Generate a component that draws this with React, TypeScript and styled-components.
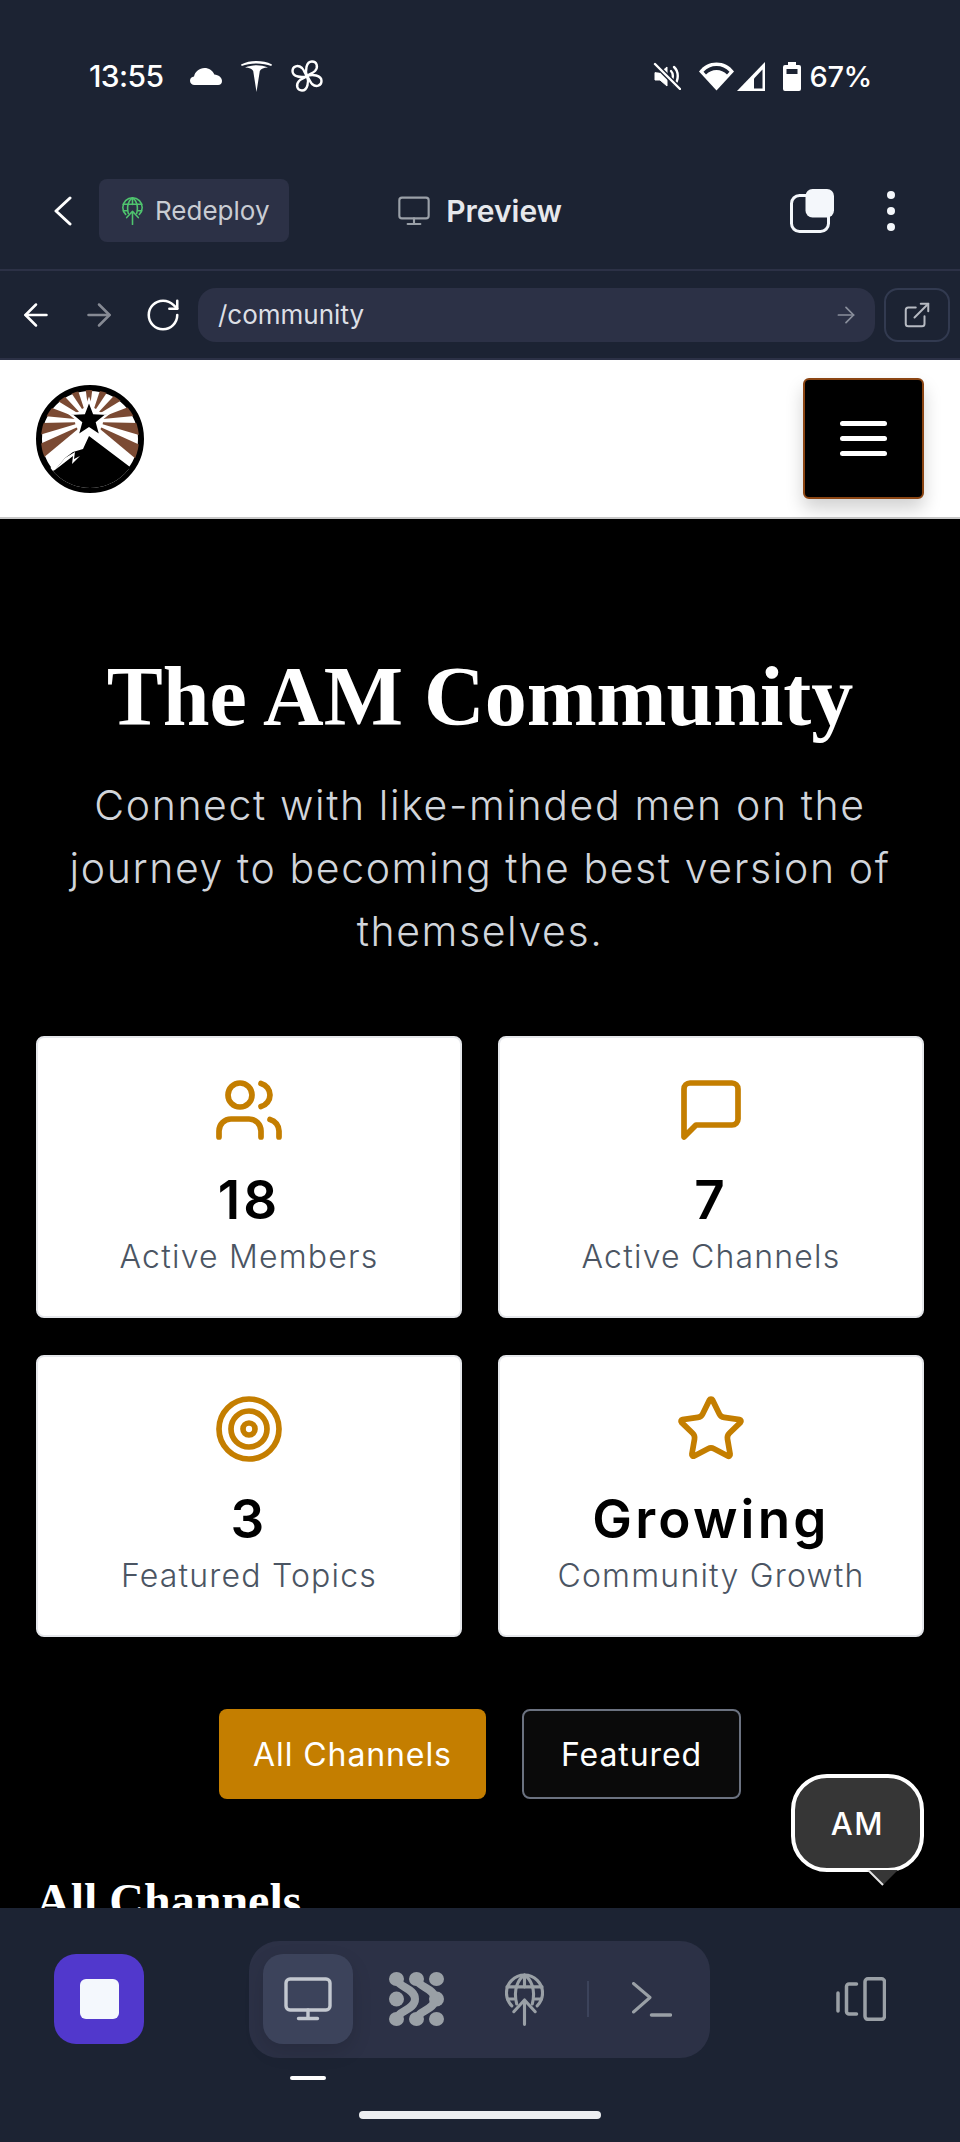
import React from "react";
import styled, { createGlobalStyle } from "styled-components";
import { ArrowLeft, ArrowRight, RotateCw, ExternalLink, Users, Target, Star } from "lucide-react";

const Global = createGlobalStyle`
  html, body { margin: 0; padding: 0; background: #1c2333; }
  * { box-sizing: border-box; }
`;

const Phone = styled.div`
  width: 960px;
  height: 2142px;
  display: flex;
  flex-direction: column;
  overflow: hidden;
  background: #1c2333;
  font-family: Inter, "Liberation Sans", sans-serif;
`;

const StatusBar = styled.div`
  height: 152px;
  flex: none;
  padding: 0 88px 0 89px;
  display: flex;
  align-items: center;
  justify-content: space-between;
  color: #fff;
`;
const StatusGroup = styled.div<{ $gap: number }>`
  display: flex;
  align-items: center;
  gap: ${(p) => p.$gap}px;
`;
const Clock = styled.span`
  font-size: 30px;
  font-weight: 500;
  letter-spacing: -0.6px;
  margin-right: 8px;
`;
const Percent = styled.span`
  font-size: 29px;
  font-weight: 500;
  margin-left: 6px;
  letter-spacing: -0.4px;
`;
const StatusSpacer = styled.span<{ $w: number }>`
  width: ${(p) => p.$w}px;
`;

const Toolbar = styled.div`
  height: 119px;
  flex: none;
  display: grid;
  grid-template-columns: 1fr auto 1fr;
  align-items: center;
  border-bottom: 2px solid #2c3146;
`;
const ToolLeft = styled.div`
  display: flex;
  align-items: center;
  gap: 27px;
  padding-left: 54px;
`;
const Chip = styled.div`
  width: 190px;
  height: 63px;
  border-radius: 8px;
  background: #2c3146;
  display: flex;
  align-items: center;
  gap: 12px;
  padding-left: 23px;
  color: #c9ccd3;
  font-size: 26px;
`;
const ToolCenter = styled.div`
  display: flex;
  align-items: center;
  gap: 16px;
`;
const PreviewLabel = styled.span`
  color: #e6e8ec;
  font-size: 30px;
  font-weight: 600;
`;
const ToolRight = styled.div`
  display: flex;
  align-items: center;
  justify-content: flex-end;
  gap: 53px;
  padding-right: 65px;
`;

const UrlRow = styled.div`
  height: 89px;
  flex: none;
  display: flex;
  align-items: center;
  padding: 0 10px 0 18px;
  border-bottom: 2px solid #2c3146;
`;
const NavIcons = styled.div`
  display: flex;
  align-items: center;
  gap: 27px;
  margin-right: 16px;
  color: #fff;
`;
const UrlField = styled.div`
  flex: 1;
  height: 54px;
  border-radius: 18px;
  background: #2c3146;
  display: flex;
  align-items: center;
  justify-content: space-between;
  padding: 0 16px 0 20px;
  color: #dcdfe5;
  font-size: 26px;
`;
const ExtButton = styled.div`
  width: 66px;
  height: 54px;
  margin-left: 9px;
  border: 2px solid #323a50;
  border-radius: 14px;
  display: flex;
  align-items: center;
  justify-content: center;
  color: #b6bac2;
`;

const Main = styled.main`
  position: relative;
  flex: 1;
  overflow: hidden;
  background: #000;
`;
const SiteHeader = styled.header`
  height: 159px;
  background: #fff;
  border-bottom: 2px solid #c8c8c8;
  display: flex;
  align-items: center;
  justify-content: space-between;
  padding: 0 36px;
`;
const MenuButton = styled.button`
  width: 121px;
  height: 121px;
  padding: 0;
  margin-top: -1px;
  background: #000;
  border: 2px solid #8b4513;
  border-radius: 6px;
  box-shadow: 0 10px 18px rgba(0, 0, 0, 0.18);
  display: flex;
  flex-direction: column;
  align-items: center;
  justify-content: center;
  gap: 10px;
`;
const MenuLine = styled.span`
  width: 47px;
  height: 5px;
  border-radius: 3px;
  background: #fff;
`;

const Hero = styled.section`
  padding: 132px 36px 0;
  text-align: center;
`;
const Title = styled.h1`
  margin: 0;
  font-family: "Liberation Serif", serif;
  font-weight: 700;
  font-size: 84px;
  line-height: 92px;
  color: #fff;
`;
const Lead = styled.p`
  margin: 31px 0 0;
  font-size: 41px;
  line-height: 63px;
  font-weight: 300;
  letter-spacing: 1.6px;
  color: #d1d5db;
`;
const StatsGrid = styled.div`
  margin: 73px 36px 0;
  display: grid;
  grid-template-columns: 1fr 1fr;
  column-gap: 36px;
  row-gap: 37px;
`;
const StatCard = styled.div`
  height: 282px;
  background: #fff;
  border: 2px solid #e5e7eb;
  border-radius: 8px;
  padding-top: 36px;
  display: flex;
  flex-direction: column;
  align-items: center;
  color: #c47e00;
`;
const StatValue = styled.div`
  margin-top: 24px;
  font-size: 53px;
  line-height: 60px;
  font-weight: 600;
  letter-spacing: 3.2px;
  color: #000;
`;
const StatLabel = styled.div`
  margin-top: 7px;
  font-size: 32px;
  line-height: 40px;
  font-weight: 300;
  letter-spacing: 1.2px;
  color: #4b5563;
`;
const Tabs = styled.div`
  margin-top: 72px;
  display: flex;
  justify-content: center;
  gap: 36px;
`;
const TabButton = styled.button<{ $active?: boolean }>`
  height: 90px;
  width: ${(p) => (p.$active ? 267 : 219)}px;
  border-radius: 8px;
  font-family: inherit;
  font-size: 32px;
  font-weight: 400;
  letter-spacing: 0.9px;
  color: #fff;
  background: ${(p) => (p.$active ? "#c47e00" : "#0a0a0a")};
  border: ${(p) => (p.$active ? "none" : "2px solid #6b7280")};
`;
const SectionTitle = styled.h2`
  margin: 75px 0 0 36px;
  font-family: "Liberation Serif", serif;
  font-weight: 700;
  font-size: 48px;
  line-height: 54px;
  color: #fff;
`;
const ChatBubble = styled.div`
  position: absolute;
  right: 36px;
  top: 1414px;
  width: 133px;
  height: 98px;
  border: 4px solid #fff;
  border-radius: 36px;
  background: #363636;
  color: #fff;
  font-size: 31px;
  font-weight: 500;
  letter-spacing: 1.5px;
  display: flex;
  align-items: center;
  justify-content: center;
`;
const BubbleTail = styled.svg`
  position: absolute;
  left: 72px;
  top: 92px;
`;

const BottomBar = styled.div`
  height: 234px;
  flex: none;
  padding-top: 33px;
  display: flex;
  flex-direction: column;
  background: #1c2333;
`;
const BottomRow = styled.div`
  display: flex;
  align-items: flex-start;
  padding-left: 54px;
`;
const StopButton = styled.div`
  width: 90px;
  height: 90px;
  margin-top: 13px;
  border-radius: 22px;
  background: #5138cc;
  display: flex;
  align-items: center;
  justify-content: center;
`;
const StopSquare = styled.span`
  width: 39px;
  height: 40px;
  border-radius: 6px;
  background: #f4f8fd;
`;
const DockColumn = styled.div`
  margin-left: 105px;
  display: flex;
  flex-direction: column;
`;
const Dock = styled.div`
  width: 461px;
  height: 117px;
  border-radius: 30px;
  background: #2c3146;
  padding: 13px 13px 14px 14px;
  display: flex;
  align-items: center;
  gap: 18px;
`;
const DockItem = styled.div<{ $active?: boolean }>`
  width: 90px;
  height: 90px;
  flex: none;
  border-radius: 20px;
  background: ${(p) => (p.$active ? "#3c435b" : "transparent")};
  box-shadow: ${(p) => (p.$active ? "0 8px 20px rgba(0,0,0,.12)" : "none")};
  display: flex;
  align-items: center;
  justify-content: center;
`;
const DockDivider = styled.span`
  width: 2px;
  height: 36px;
  flex: none;
  background: #3c435b;
`;
const ActiveMark = styled.span`
  width: 36px;
  height: 4px;
  margin: 18px 0 0 41px;
  border-radius: 2px;
  background: #fff;
`;
const DeviceSlot = styled.div`
  margin: 36px 0 0 126px;
  display: flex;
`;
const HomePill = styled.div`
  width: 242px;
  height: 8px;
  margin: 31px auto 0;
  border-radius: 4px;
  background: #eceef1;
`;

const Cloud = () => (
  <svg width="32" height="17" viewBox="0 0 32 17" fill="#fff">
    <path d="M4.5 17C2 17 0 15.2 0 12.8 0 10.5 1.8 8.8 4 8.6 5 3.5 9.3 0 14.5 0 19 0 22.7 2.6 24.3 6.5 28.5 6.8 32 9.5 32 13 32 15.4 30.5 17 28 17Z" />
  </svg>
);
const TeslaMark = () => (
  <svg width="31" height="31" viewBox="0 0 31 31" fill="#fff">
    <path d="M0 3.4C5 1 10 0 15.5 0S26 1 31 3.4L30.3 5C26 3.4 21 2.4 15.5 2.4S5 3.4.7 5Z" />
    <path d="M15.5 31 12.2 10C11 7.600 8.300 6.600 4 6.500 7.800 5 11.600 4.200 15.5 4.200s7.700.8 11.500 2.300C22.700 6.600 20 7.600 18.800 10Z" />
  </svg>
);
const Pinwheel = () => (
  <svg width="32" height="32" viewBox="0 0 32 32" fill="none" stroke="#fff" strokeWidth="2.400" strokeLinejoin="round">
    {[0, 90, 180, 270].map((a) => (
      <path key={a} transform={`rotate(${a} 16 16)`} d="M16 16C14 11 15 1.500 21 1.500 26 1.500 27.500 7 24 11 21.500 13.500 18 14 16 16Z" />
    ))}
  </svg>
);
const Muted = () => (
  <svg width="28" height="28" viewBox="0 0 28 28" fill="none" stroke="#fff" strokeWidth="2.4" strokeLinecap="round">
    <path d="M2 11v7h5l7 6V5L7 11Z" fill="#fff" strokeWidth="1" />
    <path d="M18 9c2.500 2.500 2.500 7.500 0 10M21 5c5 4.500 5 13.500 0 18" />
    <path d="M2 2l25 25" stroke="#1c2333" strokeWidth="5" />
    <path d="M2 2l25 25" />
  </svg>
);
const Wifi = () => (
  <svg width="35" height="29" viewBox="0 0 35 29">
    <path d="M0 9.500C4.500 3.500 10.500 .5 17.500 .5S30.500 3.500 35 9.500L17.500 28.500Z" fill="#fff" />
    <path d="M4.500 9.800C8 6 12.500 4 17.500 4s9.500 2 13 5.800L28 12.500C25 9.500 21.500 8 17.500 8S10 9.500 7 12.500Z" fill="#1c2333" />
  </svg>
);
const Signal = () => (
  <svg width="28" height="29" viewBox="0 0 28 29">
    <path d="M0 29 28 0V29Z" fill="#fff" />
    <path d="M17 16.500 25.500 7.500V26.500H17Z" fill="#1c2333" />
  </svg>
);
const Battery = () => (
  <svg width="18" height="29" viewBox="0 0 18 29">
    <path d="M5 0h8v3h3a2 2 0 0 1 2 2v22a2 2 0 0 1-2 2H2a2 2 0 0 1-2-2V5a2 2 0 0 1 2-2h3Z" fill="#fff" />
    <rect x="3.500" y="7" width="11" height="5" fill="#1c2333" />
  </svg>
);
const ChevronBack = () => (
  <svg width="18" height="30" viewBox="0 0 18 30" fill="none" stroke="#fff" strokeWidth="3" strokeLinecap="round" strokeLinejoin="round">
    <path d="M16 2 2 15l14 13" />
  </svg>
);
const GlobeUp = ({ width, height, color, sw }: { width: number; height: number; color: string; sw: number }) => (
  <svg width={width} height={height} viewBox="0 0 40 53" fill="none" stroke={color} strokeWidth={sw} strokeLinecap="round" strokeLinejoin="round">
    <path d="M7 33A18.500 18.500 0 1 1 33 33" />
    <path d="M12 31C8 16 14 5 20 1.500 26 5 32 16 28 31" />
    <path d="M20 1.500V14M2 13.500H38M2.500 26H9M31 26H37.500" />
    <path d="M20 52V28M9 39 20 27 31 39" />
  </svg>
);
const Monitor = ({ width, height, color, sw }: { width: number; height: number; color: string; sw: number }) => (
  <svg width={width} height={height} viewBox="0 0 48 44" fill="none" stroke={color} strokeWidth={sw} strokeLinecap="round">
    <rect x="2" y="2" width="44" height="31" rx="4" />
    <path d="M24 33v8M14.500 41.500h19" />
  </svg>
);
const Tabs2 = () => (
  <svg width="44" height="44" viewBox="0 0 44 44" fill="none">
    <rect x="1.500" y="6.500" width="37" height="36" rx="8" stroke="#f4f7fb" strokeWidth="3" />
    <rect x="15.500" y="0" width="28.500" height="28.500" rx="7" fill="#f4f7fb" />
  </svg>
);
const Dots = () => (
  <svg width="8" height="40" viewBox="0 0 8 40" fill="#f4f7fb">
    <circle cx="4" cy="4" r="4" />
    <circle cx="4" cy="20" r="4" />
    <circle cx="4" cy="36" r="4" />
  </svg>
);
const Blob = () => (
  <svg width="55" height="54" viewBox="0 0 55 54" fill="#9aa0a6">
    <ellipse cx="7.500" cy="7" rx="7.500" ry="7" />
    <ellipse cx="27.500" cy="7" rx="7.500" ry="7" />
    <ellipse cx="47.500" cy="7" rx="7.500" ry="7" />
    <ellipse cx="7.500" cy="27" rx="7.500" ry="7.500" />
    <ellipse cx="7.500" cy="47" rx="7.500" ry="7" />
    <ellipse cx="27.500" cy="47" rx="7.500" ry="7" />
    <ellipse cx="47.500" cy="47" rx="7.500" ry="7" />
    <ellipse cx="47.500" cy="27" rx="7.500" ry="7.500" />
    <g fill="none" stroke="#9aa0a6" strokeWidth="8">
      <path d="M8 7C8 15 26 16 26 27 26 38 8 39 8 47" />
      <path d="M28 7C28 15 46 16 46 27 46 38 28 39 28 47" />
    </g>
  </svg>
);
const TerminalGlyph = () => (
  <svg width="40" height="35" viewBox="0 0 40 35" fill="none" stroke="#9aa0a6" strokeLinecap="round" strokeLinejoin="round">
    <path d="M1.500 1.500 18 15.500 1.500 30" strokeWidth="3" />
    <path d="M19.500 33H38.500" strokeWidth="3.500" />
  </svg>
);
const DeviceToggle = () => (
  <svg width="50" height="44" viewBox="0 0 50 44" fill="none" stroke="#9aa0a6" strokeWidth="3.500" strokeLinecap="round" strokeLinejoin="round">
    <rect x="29" y="1.800" width="19.500" height="40.500" rx="3" />
    <path d="M20.500 7H13a2.500 2.500 0 0 0-2.500 2.500v25A2.500 2.500 0 0 0 13 37h7.500" />
    <path d="M2 16v18" />
  </svg>
);
const ChatIcon = () => (
  <svg width="72" height="72" viewBox="0 0 24 24" fill="none" stroke="currentColor" strokeWidth="1.900" strokeLinecap="round" strokeLinejoin="round">
    <path d="M21 15a2 2 0 0 1-2 2H7l-4 4V5a2 2 0 0 1 2-2h14a2 2 0 0 1 2 2z" />
  </svg>
);

const rayAngles = [-122, -99, -77, -51, -26, 0, 26, 51, 77, 99, 122];
const rayPath = (deg: number) => {
  const cx = 53;
  const cy = 36;
  const half = 7;
  const pt = (a: number, r: number) => {
    const t = ((a - 90) * Math.PI) / 180;
    return `${(cx + r * Math.cos(t)).toFixed(1)} ${(cy + r * Math.sin(t)).toFixed(1)}`;
  };
  return `M${pt(deg - half * 0.6, 14)}L${pt(deg - half, 70)}L${pt(deg + half, 70)}L${pt(deg + half * 0.6, 14)}Z`;
};
const starPoints = () => {
  const pts: string[] = [];
  for (let i = 0; i < 10; i++) {
    const r = i % 2 === 0 ? 20 : 8.500;
    const t = ((i * 36 - 90) * Math.PI) / 180;
    pts.push(`${(53 + r * Math.cos(t)).toFixed(1)},${(35 + r * Math.sin(t)).toFixed(1)}`);
  }
  return pts.join(" ");
};
const Logo = () => (
  <svg width="108" height="108" viewBox="0 0 108 108">
    <defs>
      <clipPath id="logoClip">
        <circle cx="54" cy="54" r="49" />
      </clipPath>
    </defs>
    <circle cx="54" cy="54" r="51" fill="#fff" stroke="#000" strokeWidth="6" />
    <g clipPath="url(#logoClip)">
      {rayAngles.map((a) => (
        <path key={a} d={rayPath(a)} fill="#7b4a33" />
      ))}
      <path d="M53 42 104 96V110H2V96Z" fill="#fff" />
      <path d="M53 51 47 64 37 67 29 73 19 85 2 92V110H106V96L94 82Z" fill="#000" />
      <path d="M19 85 37 71 36 79 44 71 38 74 39 67 29 73Z" fill="#fff" />
    </g>
    <polygon points={starPoints()} fill="#000" stroke="#fff" strokeWidth="2.500" />
  </svg>
);

const stats = [
  { icon: <Users size={72} strokeWidth={1.9} />, value: "18", label: "Active Members" },
  { icon: <ChatIcon />, value: "7", label: "Active Channels" },
  { icon: <Target size={72} strokeWidth={1.9} />, value: "3", label: "Featured Topics" },
  { icon: <Star size={72} strokeWidth={1.9} />, value: "Growing", label: "Community Growth" },
];

export default function App() {
  return (
    <Phone>
      <Global />
      <StatusBar>
        <StatusGroup $gap={19}>
          <Clock>13:55</Clock>
          <Cloud />
          <TeslaMark />
          <Pinwheel />
        </StatusGroup>
        <StatusGroup $gap={3}>
          <Muted />
          <StatusSpacer $w={12} />
          <Wifi />
          <Signal />
          <StatusSpacer $w={12} />
          <Battery />
          <Percent>67%</Percent>
        </StatusGroup>
      </StatusBar>
      <Toolbar>
        <ToolLeft>
          <ChevronBack />
          <Chip>
            <GlobeUp width={21} height={28} color="#4fc46e" sw={3} />
            Redeploy
          </Chip>
        </ToolLeft>
        <ToolCenter>
          <Monitor width={32} height={30} color="#9aa0a8" sw={3.2} />
          <PreviewLabel>Preview</PreviewLabel>
        </ToolCenter>
        <ToolRight>
          <Tabs2 />
          <Dots />
        </ToolRight>
      </Toolbar>
      <UrlRow>
        <NavIcons>
          <ArrowLeft size={36} strokeWidth={1.7} />
          <ArrowRight size={36} strokeWidth={1.7} color="#868a94" />
          <RotateCw size={38} strokeWidth={1.6} />
        </NavIcons>
        <UrlField>
          /community
          <ArrowRight size={26} strokeWidth={1.6} color="#8a8f9c" />
        </UrlField>
        <ExtButton>
          <ExternalLink size={30} strokeWidth={1.6} />
        </ExtButton>
      </UrlRow>
      <Main>
        <SiteHeader>
          <Logo />
          <MenuButton aria-label="Menu">
            <MenuLine />
            <MenuLine />
            <MenuLine />
          </MenuButton>
        </SiteHeader>
        <Hero>
          <Title>The AM Community</Title>
          <Lead>Connect with like-minded men on the journey to becoming the best version of themselves.</Lead>
        </Hero>
        <StatsGrid>
          {stats.map((s) => (
            <StatCard key={s.label}>
              {s.icon}
              <StatValue>{s.value}</StatValue>
              <StatLabel>{s.label}</StatLabel>
            </StatCard>
          ))}
        </StatsGrid>
        <Tabs>
          <TabButton $active>All Channels</TabButton>
          <TabButton>Featured</TabButton>
        </Tabs>
        <SectionTitle>All Channels</SectionTitle>
        <ChatBubble>
          AM
          <BubbleTail width="32" height="20" viewBox="0 0 32 20">
            <path d="M1 0 16 15 31 0Z" fill="#363636" />
            <path d="M1 0 16 15" stroke="#e5e5e5" strokeWidth="2" fill="none" />
          </BubbleTail>
        </ChatBubble>
      </Main>
      <BottomBar>
        <BottomRow>
          <StopButton>
            <StopSquare />
          </StopButton>
          <DockColumn>
            <Dock>
              <DockItem $active>
                <Monitor width={48} height={44} color="#c3c8d0" sw={3.4} />
              </DockItem>
              <DockItem>
                <Blob />
              </DockItem>
              <DockItem>
                <GlobeUp width={39} height={53} color="#9aa0a6" sw={3.2} />
              </DockItem>
              <DockDivider />
              <DockItem>
                <TerminalGlyph />
              </DockItem>
            </Dock>
            <ActiveMark />
          </DockColumn>
          <DeviceSlot>
            <DeviceToggle />
          </DeviceSlot>
        </BottomRow>
        <HomePill />
      </BottomBar>
    </Phone>
  );
}
